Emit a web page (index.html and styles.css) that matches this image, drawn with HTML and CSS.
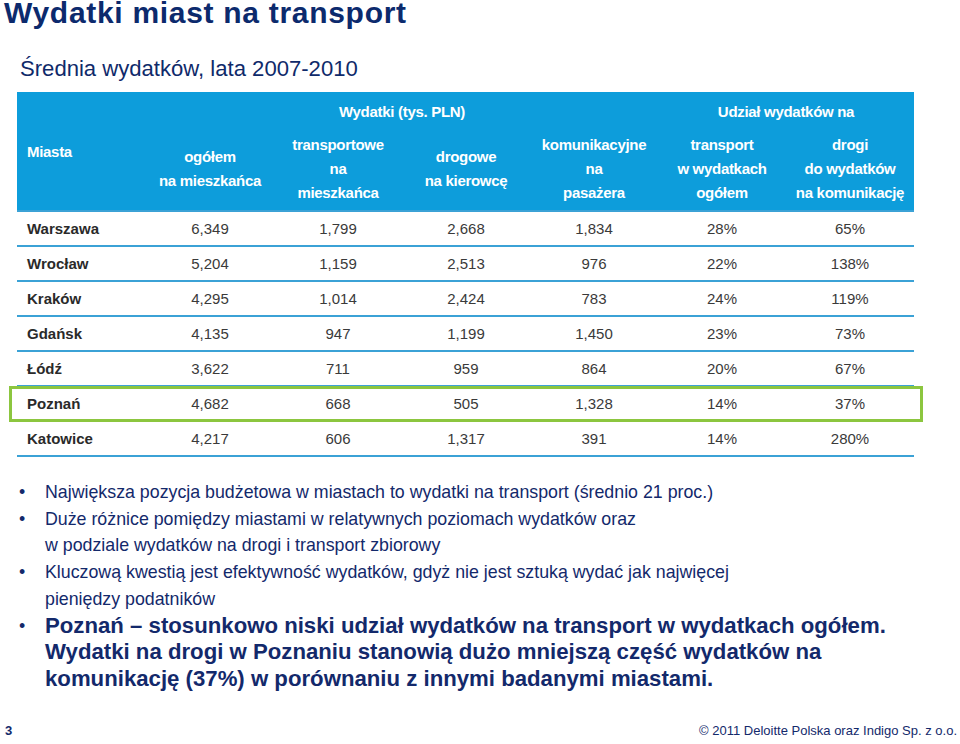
FILE: index.html
```html
<!DOCTYPE html>
<html lang="pl">
<head>
<meta charset="utf-8">
<title>Wydatki miast na transport</title>
<link rel="stylesheet" href="styles.css">
</head>
<body>
<div class="slide">
  <h1 class="title">Wydatki miast na transport</h1>
  <h2 class="subtitle">Średnia wydatków, lata 2007-2010</h2>

  <div class="table">
    <div class="thead">
      <div class="th-group g1">Wydatki (tys. PLN)</div>
      <div class="th-group g2">Udział wydatków na</div>
      <div class="th th-city">Miasta</div>
      <div class="th">ogółem<br>na mieszkańca</div>
      <div class="th">transportowe<br>na<br>mieszkańca</div>
      <div class="th">drogowe<br>na kierowcę</div>
      <div class="th">komunikacyjne<br>na<br>pasażera</div>
      <div class="th">transport<br>w wydatkach<br>ogółem</div>
      <div class="th">drogi<br>do wydatków<br>na komunikację</div>
    </div>
    <div class="tbody">
      <div class="tr"><div class="city">Warszawa</div><div>6,349</div><div>1,799</div><div>2,668</div><div>1,834</div><div>28%</div><div>65%</div></div>
      <div class="tr"><div class="city">Wrocław</div><div>5,204</div><div>1,159</div><div>2,513</div><div>976</div><div>22%</div><div>138%</div></div>
      <div class="tr"><div class="city">Kraków</div><div>4,295</div><div>1,014</div><div>2,424</div><div>783</div><div>24%</div><div>119%</div></div>
      <div class="tr"><div class="city">Gdańsk</div><div>4,135</div><div>947</div><div>1,199</div><div>1,450</div><div>23%</div><div>73%</div></div>
      <div class="tr"><div class="city">Łódź</div><div>3,622</div><div>711</div><div>959</div><div>864</div><div>20%</div><div>67%</div></div>
      <div class="tr highlight"><div class="city">Poznań</div><div>4,682</div><div>668</div><div>505</div><div>1,328</div><div>14%</div><div>37%</div></div>
      <div class="tr"><div class="city">Katowice</div><div>4,217</div><div>606</div><div>1,317</div><div>391</div><div>14%</div><div>280%</div></div>
    </div>
  </div>

  <ul class="bullets">
    <li>Największa pozycja budżetowa w miastach to wydatki na transport (średnio 21 proc.)</li>
    <li>Duże różnice pomiędzy miastami w relatywnych poziomach wydatków oraz<br>w podziale wydatków na drogi i transport zbiorowy</li>
    <li>Kluczową kwestią jest efektywność wydatków, gdyż nie jest sztuką wydać jak najwięcej<br>pieniędzy podatników</li>
    <li class="strong">Poznań – stosunkowo niski udział wydatków na transport w wydatkach ogółem.<br>Wydatki na drogi w Poznaniu stanowią dużo mniejszą część wydatków na<br>komunikację (37%) w porównaniu z innymi badanymi miastami.</li>
  </ul>

  <div class="footer">
    <span class="page">3</span>
    <span class="copy">© 2011 Deloitte Polska oraz Indigo Sp. z o.o.</span>
  </div>
</div>
</body>
</html>
```

FILE: styles.css
```css
* { box-sizing: border-box; }
html, body { margin: 0; padding: 0; background: #fff; }
body { font-family: "Liberation Sans", Arial, sans-serif; color: #13296b; }

.slide {
  width: 960px;
  height: 744px;
  display: flex;
  flex-direction: column;
  overflow: hidden;
}

.title {
  margin: 0 0 0 4px;
  font-size: 30px;
  line-height: 26px;
  letter-spacing: 0.7px;
  font-weight: bold;
  color: #0c2a6d;
}

.subtitle {
  margin: 30px 0 0 20px;
  font-size: 22.1px;
  line-height: 26px;
  font-weight: normal;
  color: #0f2a6a;
}

.table {
  margin: 10px 0 0 17px;
  width: 897px;
}

.thead {
  background: #0d9ddb;
  color: #fff;
  height: 118px;
  display: grid;
  grid-template-columns: 129px repeat(6, 128px);
  grid-template-rows: 36px 82px;
  font-weight: bold;
  font-size: 15px;
  letter-spacing: -0.3px;
}
.th-group {
  grid-row: 1;
  display: flex;
  align-items: center;
  justify-content: center;
  padding-top: 2px;
}
.g1 { grid-column: 2 / 6; }
.g2 { grid-column: 6 / 8; }
.th {
  grid-row: 2;
  line-height: 24px;
  text-align: center;
  align-self: center;
  padding-bottom: 1px;
}
.th-city {
  text-align: left;
  align-self: start;
  padding: 12px 0 0 10px;
}

.tbody { border-top: 2px solid #3ba2d6; }
.tr {
  position: relative;
  display: grid;
  grid-template-columns: 129px repeat(6, 128px);
  height: 35px;
  border-bottom: 2px solid #3ba2d6;
  align-items: center;
  font-size: 15px;
  color: #3a3a3a;
  text-align: center;
}
.tr .city {
  text-align: left;
  padding-left: 10px;
  font-weight: bold;
  color: #2a2a2a;
}
.tr.highlight::after {
  content: "";
  position: absolute;
  left: -8px;
  right: -9px;
  top: -1px;
  bottom: -2px;
  border: 3px solid #8cc63f;
  pointer-events: none;
}

.bullets {
  list-style: none;
  margin: 22px 0 0 0;
  padding: 0;
  font-size: 17.8px;
  line-height: 26.7px;
  color: #13296b;
}
.bullets li {
  position: relative;
  padding-left: 45px;
}
.bullets li::before {
  content: "•";
  position: absolute;
  left: 19px;
  top: 0;
  font-size: 17.8px;
  font-weight: normal;
}
.bullets li.strong {
  font-weight: bold;
  font-size: 22.2px;
}

.footer {
  margin-top: auto;
  height: 22px;
  padding: 0 3px 6px 5px;
  display: flex;
  justify-content: space-between;
  align-items: center;
  font-size: 13px;
  color: #13296b;
}
.footer .page { font-weight: bold; }
```
